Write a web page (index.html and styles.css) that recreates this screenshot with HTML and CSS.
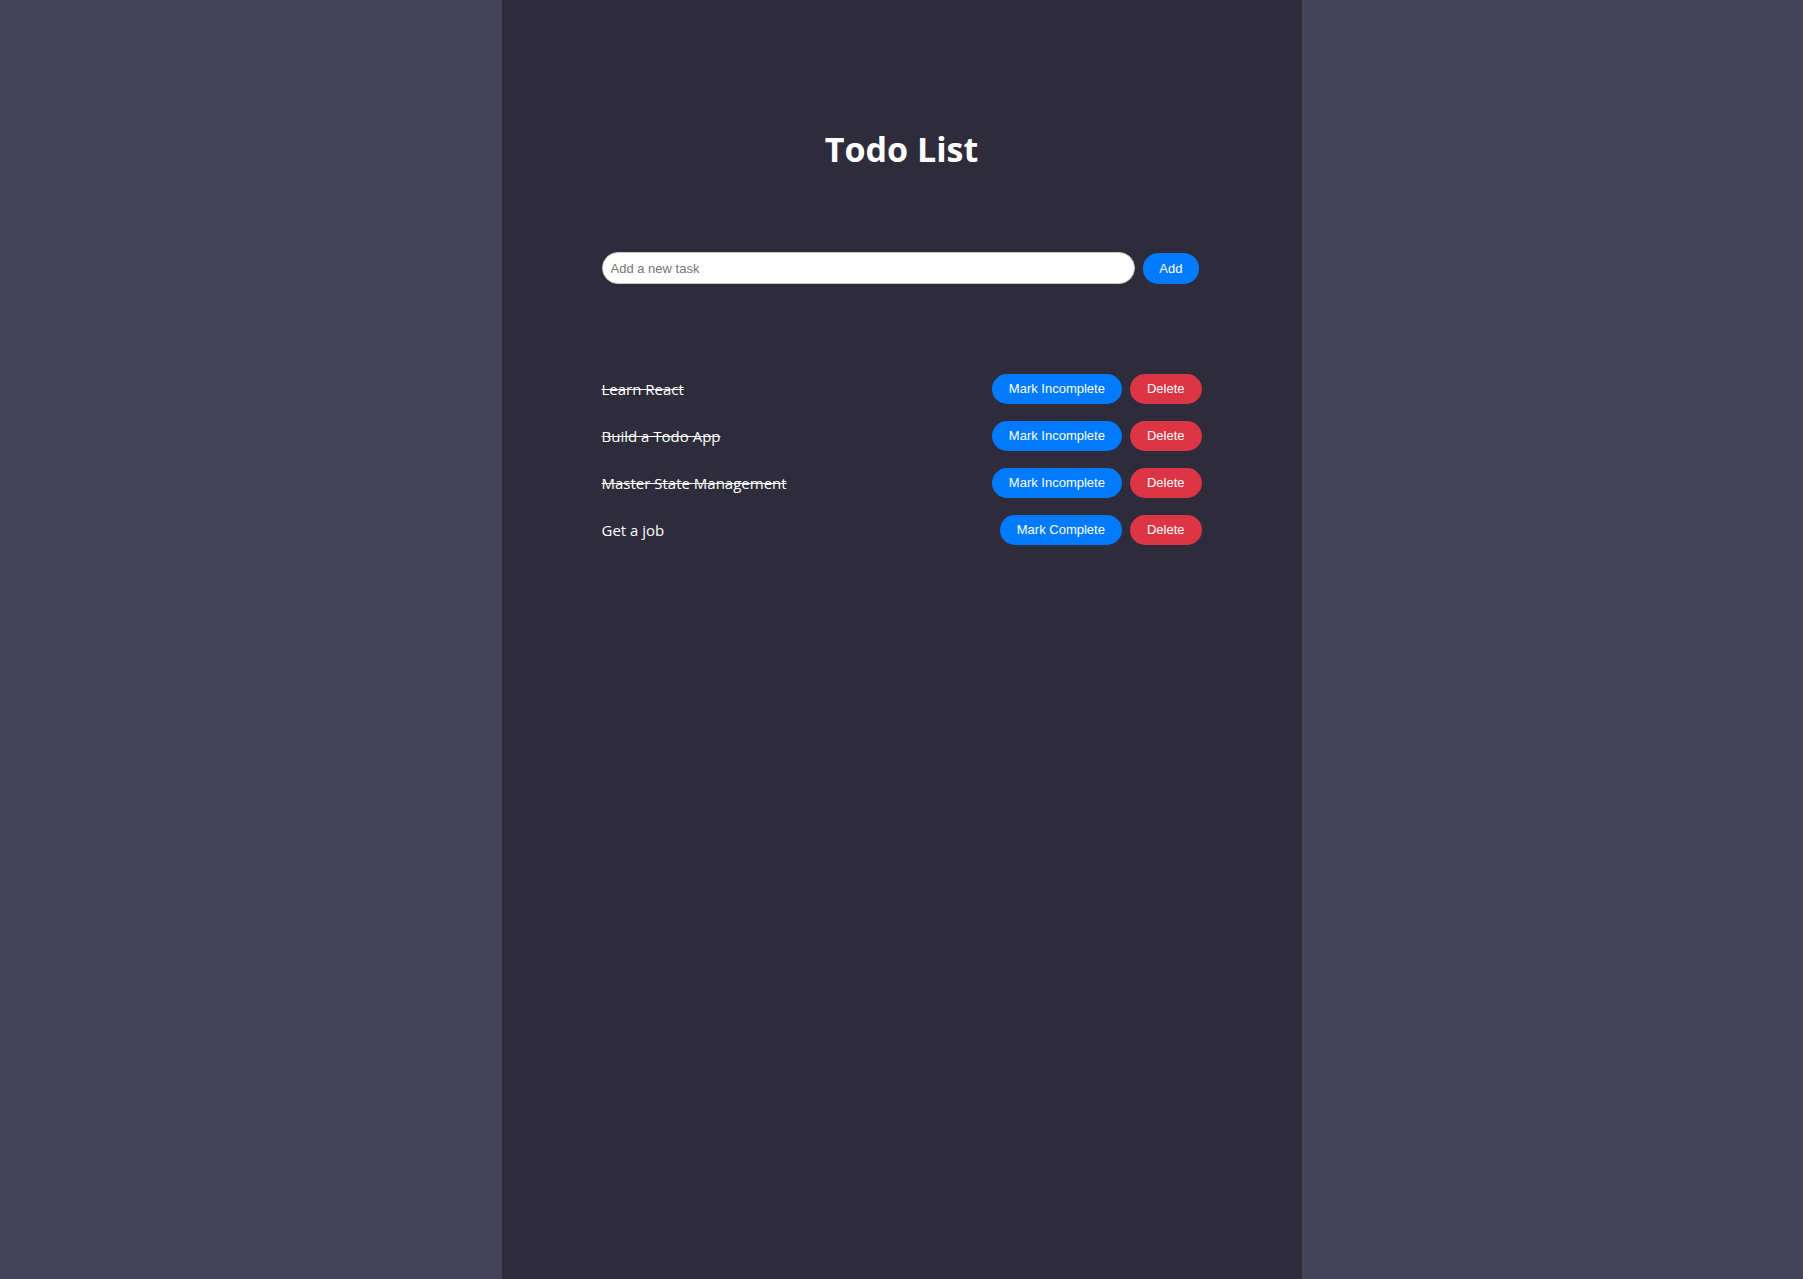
FILE: index.html
```html
<!DOCTYPE html>
<html lang="en">
<head>
<meta charset="utf-8">
<title>Todo List</title>
<link rel="stylesheet" href="styles.css">
</head>
<body>
<div class="app">
  <h1 class="title">Todo List</h1>
  <form class="add-form">
    <input class="add-input" type="text" placeholder="Add a new task">
    <button class="btn btn-blue btn-add" type="button">Add</button>
  </form>
  <ul class="todo-list">
    <li class="todo-item">
      <span class="todo-text done">Learn React</span>
      <div class="actions">
        <button class="btn btn-blue" type="button">Mark Incomplete</button>
        <button class="btn btn-red" type="button">Delete</button>
      </div>
    </li>
    <li class="todo-item">
      <span class="todo-text done">Build a Todo App</span>
      <div class="actions">
        <button class="btn btn-blue" type="button">Mark Incomplete</button>
        <button class="btn btn-red" type="button">Delete</button>
      </div>
    </li>
    <li class="todo-item">
      <span class="todo-text done">Master State Management</span>
      <div class="actions">
        <button class="btn btn-blue" type="button">Mark Incomplete</button>
        <button class="btn btn-red" type="button">Delete</button>
      </div>
    </li>
    <li class="todo-item">
      <span class="todo-text">Get a job</span>
      <div class="actions">
        <button class="btn btn-blue" type="button">Mark Complete</button>
        <button class="btn btn-red" type="button">Delete</button>
      </div>
    </li>
  </ul>
</div>
</body>
</html>
```

FILE: styles.css
```css
html, body {
  margin: 0;
  padding: 0;
  height: 100%;
}
body {
  background: #454359;
  font-family: "Open Sans", "Liberation Sans", sans-serif;
  color: #fff;
}
.app {
  box-sizing: border-box;
  width: 800px;
  min-height: 100%;
  margin: 0 auto;
  background: #2e2c3b;
  padding: 126px 100px 40px;
}
.title {
  margin: 0;
  text-align: center;
  font-size: 34px;
  line-height: 46px;
  font-weight: 700;
  color: #fff;
}
.add-form {
  display: flex;
  align-items: center;
  gap: 8px;
  width: 597px;
  margin: 80px 0 0;
}
.add-input {
  flex: 1;
  box-sizing: border-box;
  height: 32px;
  padding: 0 8px;
  border: 1px solid #c8c8c8;
  border-radius: 16px;
  background: #fff;
  font-family: "Liberation Sans", Arial, sans-serif;
  font-size: 13px;
  color: #333;
  outline: none;
}
.add-input::placeholder {
  color: #757575;
}
.btn {
  box-sizing: border-box;
  height: 30px;
  padding: 0 17px;
  border: none;
  border-radius: 15px;
  font-family: "Liberation Sans", Arial, sans-serif;
  font-size: 13px;
  color: #fff;
  cursor: pointer;
}
.btn-add {
  height: 31px;
  padding: 0 16px;
}
.btn-blue {
  background: #007bff;
}
.btn-red {
  background: #dc3545;
}
.todo-list {
  list-style: none;
  margin: 81px 0 0;
  padding: 0;
}
.todo-item {
  display: flex;
  align-items: center;
  justify-content: space-between;
  height: 47px;
}
.todo-text {
  font-size: 15px;
  color: #fff;
}
.todo-text.done {
  text-decoration: line-through;
}
.actions {
  display: flex;
  gap: 8px;
}
```
